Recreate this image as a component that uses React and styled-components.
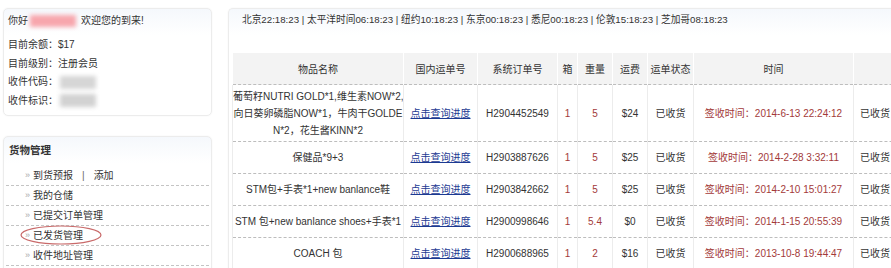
import React from 'react';
import styled, { createGlobalStyle } from 'styled-components';

const GlobalStyle = createGlobalStyle`
  html, body {
    margin: 0;
    padding: 0;
    background: #fff;
    overflow: hidden;
  }
  body {
    font-family: "Liberation Sans", "Noto Sans CJK SC", sans-serif;
    font-size: 10px;
    color: #333;
  }
`;

const orders = [
  {
    name: ['葡萄籽NUTRI GOLD*1,维生素NOW*2,', '向日葵卵磷脂NOW*1，牛肉干GOLDE', 'N*2，花生酱KINN*2'],
    no: 'H2904452549', box: 1, weight: '5', fee: '$24', time: '2014-6-13 22:24:12',
  },
  { name: ['保健品*9+3'], no: 'H2903887626', box: 1, weight: '5', fee: '$25', time: '2014-2-28 3:32:11' },
  { name: ['STM包+手表*1+new banlance鞋'], no: 'H2903842662', box: 1, weight: '5', fee: '$25', time: '2014-2-10 15:01:27' },
  { name: ['STM 包+new banlance shoes+手表*1'], no: 'H2900998646', box: 1, weight: '5.4', fee: '$0', time: '2014-1-15 20:55:39' },
  { name: ['COACH 包'], no: 'H2900688965', box: 1, weight: '2', fee: '$16', time: '2013-10-8 19:44:47' },
];

const menu = ['我的仓储', '已提交订单管理', '已发货管理', '收件地址管理'];

const Page = styled.div`
  display: flex;
  align-items: flex-start;
  gap: 16px;
  padding: 8px 0 0 3px;
  width: 1000px;
`;

const Side = styled.div`
  width: 209px;
  display: flex;
  flex-direction: column;
  gap: 20px;
`;

const Panel = styled.div`
  border: 1px solid #ececec;
  border-radius: 5px;
  background: linear-gradient(#f5f8fc, #fff 26px);
  box-shadow: 0 0 2px rgba(0, 0, 0, 0.05);
`;

const InfoPanel = styled(Panel)`
  padding: 4px 4px 8px 4px;
  height: 94px;
`;

const Greeting = styled.div`
  line-height: 16px;
  margin-bottom: 7px;
  display: flex;
  align-items: center;
`;

const InfoLine = styled.div`
  line-height: 18.5px;
  display: flex;
  align-items: center;
`;

const Blur = styled.span`
  display: inline-block;
  width: ${p => p.$w}px;
  height: ${p => p.$h}px;
  background: ${p => p.$c};
  filter: blur(2px);
  margin: 0 ${p => p.$gap || 0}px 0 2px;
`;

const MenuPanel = styled(Panel)`
  padding: 6px 2px 0 2px;
  min-height: 140px;
`;

const MenuTitle = styled.div`
  font-weight: bold;
  font-size: 10.5px;
  padding-left: 3px;
  line-height: 14px;
  margin-bottom: 9px;
`;

const MenuItem = styled.div`
  position: relative;
  height: 19px;
  line-height: 19px;
  border-bottom: 1px dashed #c4c4c4;
  padding-left: 19px;
  display: flex;
  align-items: center;
`;

const Arrow = styled.span`
  color: #aaa;
  font-size: 9px;
  margin-right: 3px;
`;

const Sep = styled.span`
  color: #666;
  margin: 0 9px;
`;

const Ring = styled.svg`
  position: absolute;
  left: 13px;
  top: -3px;
  pointer-events: none;
`;

const Main = styled(Panel)`
  flex: 1;
  padding: 3px 0 0 3px;
  min-height: 270px;
  border-right: none;
`;

const Clock = styled.div`
  padding-left: 10px;
  font-size: 9.7px;
  line-height: 15px;
  margin-bottom: 26px;
`;

const Table = styled.table`
  border-collapse: collapse;
  table-layout: fixed;
  width: 682px;
`;

const Th = styled.th`
  width: ${p => p.$w}px;
  height: 31px;
  background: #f3f3f3;
  font-weight: normal;
  color: #333;
  border-left: 1px solid #fff;
  border-right: 1px solid #fff;
  border-bottom: 1px dashed #bdbdbd;
  padding: 0;
`;

const Td = styled.td`
  text-align: ${p => (p.$left ? 'left' : 'center')};
  color: ${p => (p.$red ? '#a33a3a' : '#333')};
  border-left: 1px solid #ececec;
  border-right: 1px solid #ececec;
  border-bottom: 1px dashed #bdbdbd;
  line-height: 17px;
  padding: ${p => (p.$tall ? '3px 0 2px' : '7px 0')};
  padding-left: ${p => (p.$left ? '6px' : '0')};
  white-space: nowrap;
  overflow: hidden;
`;

const Link = styled.a`
  color: #1c3a92;
  text-decoration: underline;
`;

const Signed = styled.span`
  color: #a33a3a;
`;

const cols = [
  ['物品名称', 170], ['国内运单号', 73], ['系统订单号', 79], ['箱', 19], ['重量', 34],
  ['运费', 34], ['运单状态', 45], ['时间', 159], ['', 69],
];

export default function App() {
  return (
    <>
      <GlobalStyle />
      <Page>
        <Side>
          <InfoPanel>
            <Greeting>
              你好<Blur $w={46} $h={12} $c="#f7a6ad" $gap={5} />欢迎您的到来!
            </Greeting>
            <InfoLine>目前余额：$17</InfoLine>
            <InfoLine>目前级别：注册会员</InfoLine>
            <InfoLine>收件代码：<Blur $w={36} $h={13} $c="#d6d6d6" /></InfoLine>
            <InfoLine>收件标识：<Blur $w={36} $h={13} $c="#d2d2d2" /></InfoLine>
          </InfoPanel>
          <MenuPanel>
            <MenuTitle>货物管理</MenuTitle>
            <MenuItem>
              <Arrow>»</Arrow>到货预报<Sep>|</Sep>添加
            </MenuItem>
            {menu.map(m => (
              <MenuItem key={m}>
                <Arrow>»</Arrow>{m}
                {m === '已发货管理' && (
                  <Ring width="84" height="24" viewBox="0 0 84 24">
                    <ellipse cx="42" cy="12" rx="40" ry="9" fill="none" stroke="#c96a6a" strokeWidth="1.2" />
                  </Ring>
                )}
              </MenuItem>
            ))}
          </MenuPanel>
        </Side>
        <Main>
          <Clock>
            北京22:18:23 | 太平洋时间06:18:23 | 纽约10:18:23 | 东京00:18:23 | 悉尼00:18:23 | 伦敦15:18:23 | 芝加哥08:18:23
          </Clock>
          <Table>
            <thead>
              <tr>
                {cols.map(([t, w], i) => (
                  <Th key={i} $w={w}>{t}</Th>
                ))}
              </tr>
            </thead>
            <tbody>
              {orders.map(o => (
                <tr key={o.no}>
                  <Td $tall={o.name.length > 1}>
                    {o.name.map(l => <div key={l}>{l}</div>)}
                  </Td>
                  <Td><Link href="#">点击查询进度</Link></Td>
                  <Td>{o.no}</Td>
                  <Td $red>{o.box}</Td>
                  <Td $red>{o.weight}</Td>
                  <Td>{o.fee}</Td>
                  <Td>已收货</Td>
                  <Td><Signed>签收时间：{o.time}</Signed></Td>
                  <Td $left>已收货</Td>
                </tr>
              ))}
            </tbody>
          </Table>
        </Main>
      </Page>
    </>
  );
}
